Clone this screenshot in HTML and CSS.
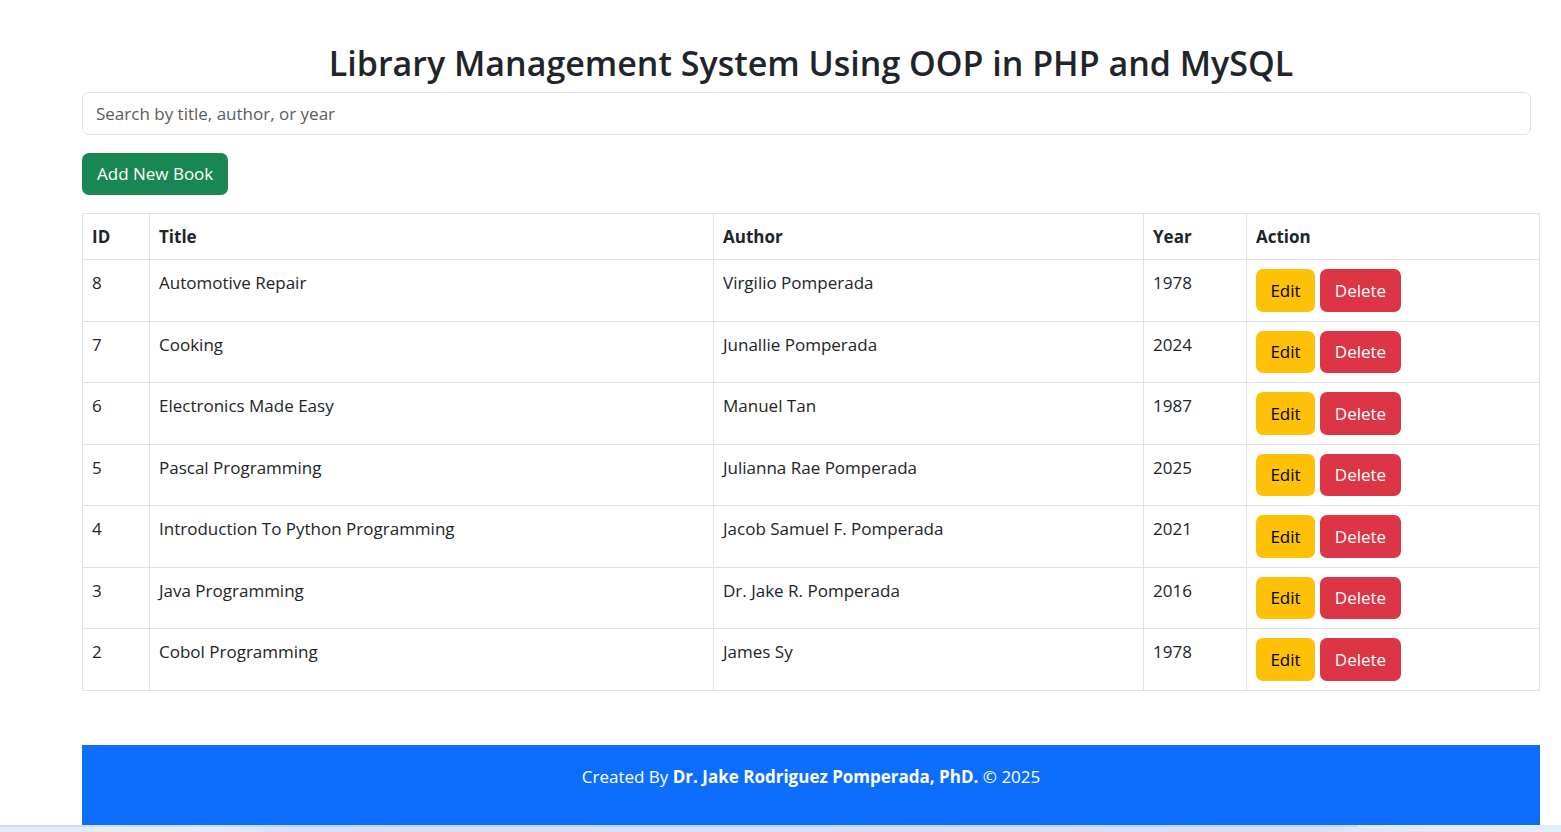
FILE: index.html
```html
<!DOCTYPE html>
<html lang="en">
<head>
<meta charset="utf-8">
<title>Library Management System</title>
<link rel="stylesheet" href="styles.css">
</head>
<body>
<div class="container">
<main>
<h1 class="heading">Library Management System Using OOP in PHP and MySQL</h1>
<form class="search"><input class="search-input" type="text" aria-label="Search books" placeholder="Search by title, author, or year"></form>
<button class="btn btn-success" type="button">Add New Book</button>
<table class="books">
<colgroup><col class="col-id"><col class="col-title"><col class="col-author"><col class="col-year"><col class="col-action"></colgroup>
<thead><tr><th>ID</th><th>Title</th><th>Author</th><th>Year</th><th>Action</th></tr></thead>
<tbody>
<tr><td>8</td><td>Automotive Repair</td><td>Virgilio Pomperada</td><td>1978</td><td><div class="actions"><button class="btn btn-warning" type="button">Edit</button><button class="btn btn-danger" type="button">Delete</button></div></td></tr>
<tr><td>7</td><td>Cooking</td><td>Junallie Pomperada</td><td>2024</td><td><div class="actions"><button class="btn btn-warning" type="button">Edit</button><button class="btn btn-danger" type="button">Delete</button></div></td></tr>
<tr><td>6</td><td>Electronics Made Easy</td><td>Manuel Tan</td><td>1987</td><td><div class="actions"><button class="btn btn-warning" type="button">Edit</button><button class="btn btn-danger" type="button">Delete</button></div></td></tr>
<tr><td>5</td><td>Pascal Programming</td><td>Julianna Rae Pomperada</td><td>2025</td><td><div class="actions"><button class="btn btn-warning" type="button">Edit</button><button class="btn btn-danger" type="button">Delete</button></div></td></tr>
<tr><td>4</td><td>Introduction To Python Programming</td><td>Jacob Samuel F. Pomperada</td><td>2021</td><td><div class="actions"><button class="btn btn-warning" type="button">Edit</button><button class="btn btn-danger" type="button">Delete</button></div></td></tr>
<tr><td>3</td><td>Java Programming</td><td>Dr. Jake R. Pomperada</td><td>2016</td><td><div class="actions"><button class="btn btn-warning" type="button">Edit</button><button class="btn btn-danger" type="button">Delete</button></div></td></tr>
<tr><td>2</td><td>Cobol Programming</td><td>James Sy</td><td>1978</td><td><div class="actions"><button class="btn btn-warning" type="button">Edit</button><button class="btn btn-danger" type="button">Delete</button></div></td></tr>
</tbody>
</table>
</main>
<footer class="footer">Created By <strong>Dr. Jake Rodriguez Pomperada, PhD.</strong> © 2025</footer>
</div>
<div class="edge"><div class="edge-shadow"></div></div>
</body>
</html>
```
FILE: styles.css
```css
* { box-sizing: border-box; }
body {
  margin: 0;
  min-height: 100vh;
  display: flex;
  flex-direction: column;
  background: #fff;
  color: #212529;
  font-family: "Segoe UI", "Open Sans", "Noto Sans", sans-serif;
  font-size: 17px;
  line-height: 27px;
}
.container {
  flex: 1;
  display: flex;
  flex-direction: column;
  padding: 42px 21px 0 82px;
}
.heading {
  margin: 0 0 8px;
  font-size: 34px;
  font-weight: 600;
  line-height: 42px;
  text-align: center;
}
.search { margin: 0 9px 18px 0; }
.search-input {
  display: block;
  width: 100%;
  height: 43px;
  padding: 6px 13px;
  border: 1px solid #dee2e6;
  border-radius: 7px;
  background: #fff;
  color: inherit;
  font: inherit;
}
.search-input::placeholder { color: #595c5f; opacity: 1; }
.btn {
  height: 42px;
  padding: 0 14px;
  border: 0;
  border-radius: 7px;
  font: inherit;
  line-height: 28px;
  cursor: pointer;
}
.btn-success { padding: 0 15px; background: #198754; color: #fff; }
.btn-warning { background: #ffc107; color: #000; }
.btn-danger { background: #dc3545; color: #fff; }
.books {
  width: 100%;
  margin: 18px 0 54px;
  border-collapse: collapse;
  table-layout: fixed;
}
.books th, .books td {
  padding: 9px;
  border: 1px solid #dee2e6;
  text-align: left;
  vertical-align: top;
}
.books th { font-weight: 700; }
.books tbody tr:nth-child(odd) .btn { height: 43px; }
.col-id { width: 67px; }
.col-author { width: 430px; }
.col-year { width: 103px; }
.col-action { width: 293px; }
.actions { display: flex; gap: 5px; }
.actions .btn-warning { min-width: 59px; }
.actions .btn-danger { min-width: 81px; }
.footer {
  flex: 1;
  padding: 18px;
  background: #0d6efd;
  color: #fff;
  text-align: center;
}
.edge {
  height: 7px;
  background: linear-gradient(to right, #e2edf8 0%, #e4edf8 12%, #d3e3fb 19%, #d8dff5 26%, #d8dff5 35%, #d3e3fb 42%, #d8dff5 65%, #d3e0f8 73%, #d8def2 82%, #e1ebf6 90%, #e2eef9 100%);
}
.edge-shadow {
  width: 87%;
  height: 2px;
  background: rgb(0 0 0 / 7%);
}
```
